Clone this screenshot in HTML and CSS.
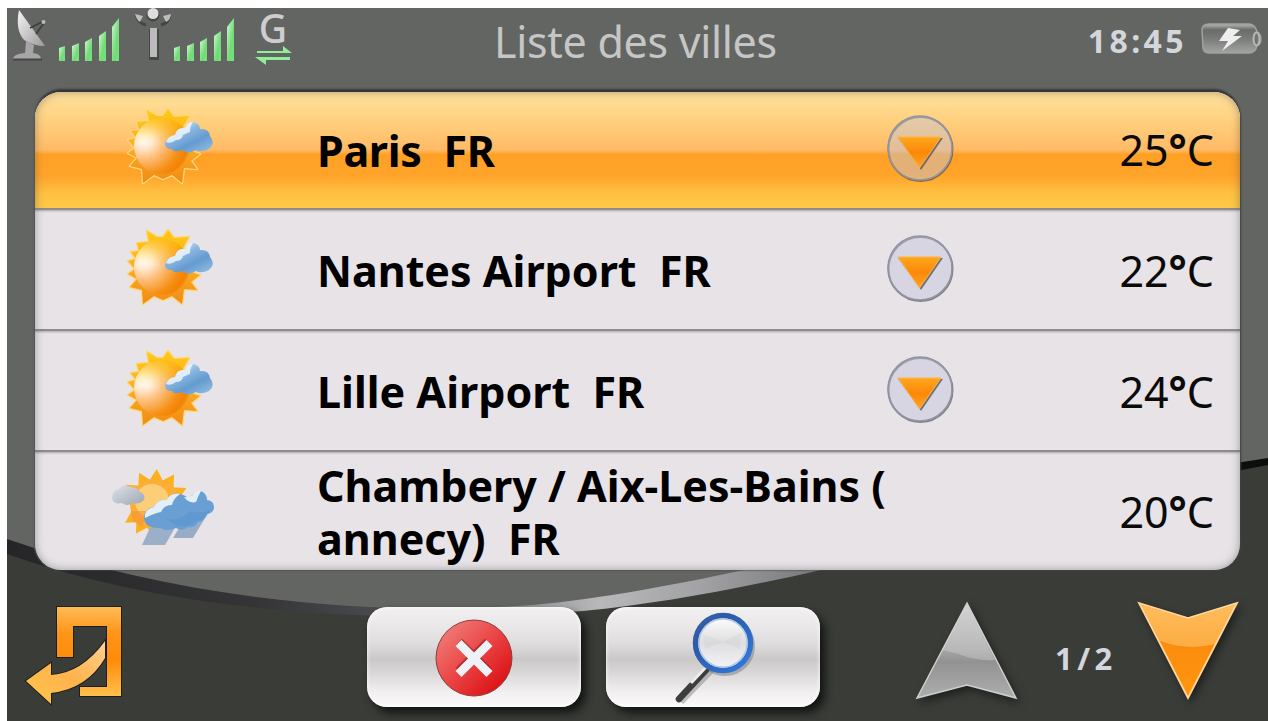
FILE: index.html
```html
<!DOCTYPE html>
<html lang="fr">
<head>
<meta charset="utf-8">
<title>Liste des villes</title>
<link rel="stylesheet" href="styles.css">
</head>
<body>
<svg class="defs" width="0" height="0" aria-hidden="true">
  <defs>
    <radialGradient id="sunBody" gradientUnits="userSpaceOnUse" cx="38" cy="39" r="52">
      <stop offset="0" stop-color="#fffdf8"/><stop offset=".15" stop-color="#fff0e0"/><stop offset=".4" stop-color="#fdbf7c"/><stop offset=".7" stop-color="#f68f14"/><stop offset=".85" stop-color="#f28206"/><stop offset="1" stop-color="#f9b428"/>
    </radialGradient>
    <linearGradient id="ray" gradientUnits="userSpaceOnUse" x1="0" y1="8" x2="0" y2="85">
      <stop offset="0" stop-color="#ffcb12"/><stop offset=".5" stop-color="#fbae24"/><stop offset="1" stop-color="#f08a14"/>
    </linearGradient>
    <linearGradient id="sunTop" x1="0" y1="0" x2="0" y2="1">
      <stop offset="0" stop-color="#ffc80a"/><stop offset=".45" stop-color="#ffc80a" stop-opacity="0"/>
    </linearGradient>
    <linearGradient id="cloudBlue" x1="0" y1="0" x2=".8" y2="1">
      <stop offset=".1" stop-color="#e9f4fc"/><stop offset=".4" stop-color="#8db9e2"/><stop offset=".7" stop-color="#659bd0"/><stop offset="1" stop-color="#8bb8df"/>
    </linearGradient>
    <linearGradient id="cloudGray" x1="0" y1="0" x2="1" y2="1">
      <stop offset="0" stop-color="#dde2e9"/><stop offset="1" stop-color="#9ea6b3"/>
    </linearGradient>
    <linearGradient id="tri" x1="0" y1="0" x2="0" y2="1">
      <stop offset="0" stop-color="#ffa71e"/><stop offset=".5" stop-color="#fb8806"/><stop offset="1" stop-color="#ffa42c"/>
    </linearGradient>
    <linearGradient id="silver" x1="0" y1="0" x2="1" y2="1">
      <stop offset="0" stop-color="#f4f4f4"/><stop offset="1" stop-color="#9d9b9c"/>
    </linearGradient>
    <linearGradient id="green" x1="0" y1="0" x2="1" y2="1">
      <stop offset="0" stop-color="#d2f8d2"/><stop offset=".6" stop-color="#72db78"/><stop offset="1" stop-color="#72e678"/>
    </linearGradient>

    <path id="r" d="M-8-23 0-37 8-23z"/>
    <symbol id="sunny-cloud" viewBox="0 0 110 100">
      <g stroke="#ffd67a" stroke-width="2.500" stroke-linejoin="round" fill="url(#ray)" paint-order="stroke">
        <path d="M43 22 41 11 51 17 57 17 62 10 68 18 83 17 77 28 83 38 85 52 94 55 85 62 91 70 78 69 76 84 66 76 57 80 48 76 37 84 36 70 24 67 31 59 22 54 29 49 22 41 30 39 25 32 33 31 31 23z"/>
      </g>
      <circle cx="56" cy="47" r="28" fill="url(#sunBody)"/>
      <circle cx="56" cy="47" r="28" fill="url(#sunTop)" opacity=".75"/>
      <path d="M59 45Q60 38 69 36 71 28 79 29 82 22 88 23 94 25 94 30 103 29 104 37 110 44 103 50 95 54 90 51 82 56 76 51 68 54 66 50 59 50 59 45z" fill="url(#cloudBlue)"/>
      <path d="M60 43Q62 37 69 36 71 28 79 29 82 22 87 23 84 27 84 33 79 35 77 36 76 41 70 41 65 45 60 43z" fill="#f4faff" opacity=".8"/>
    </symbol>
    <symbol id="sunny-rain" viewBox="0 0 110 100">
      <g transform="translate(49 43) rotate(3) scale(.95)" fill="#fbb01c">
        <use href="#r"/><use href="#r" transform="rotate(30)"/><use href="#r" transform="rotate(60)"/><use href="#r" transform="rotate(180)"/><use href="#r" transform="rotate(210)"/><use href="#r" transform="rotate(235)"/><use href="#r" transform="rotate(300)"/><use href="#r" transform="rotate(330)"/>
      </g>
      <circle cx="49" cy="43" r="25" fill="#fcae35"/>
      <circle cx="46" cy="40" r="17" fill="#ffdd9c" opacity=".65"/>
      <path d="M25 50 42 50 36 66 27 60z" fill="#f5923a" opacity=".6"/>
      <path d="M6 37Q6 29 13 28 18 22 25 26 31 26 33 30 40 33 38 39 33 44 27 42 21 46 16 42 7 44 6 37z" fill="url(#cloudGray)"/>
      <path d="M44 67 70 65 59 84H36z" fill="#9cafc9"/><path d="M75 64 99 57 87 77H67z" fill="#98acc8"/>
      <path d="M38 58Q38 47 48 46 51 38 60 39 66 31 74 33 79 34 82 37 85 36 87 33 91 28 97 31 101 34 101 39 108 40 108 46 108 52 101 53 99 60 92 61 88 68 82 66 76 71 70 67 60 71 54 67 40 68 38 58z" fill="#699fd3"/>
      <path d="M39 57Q38 48 48 46 51 38 60 39 66 31 74 33 67 38 66 44 58 44 55 51 49 52 39 57zM78 36Q85 37 87 33 90 29 95 30 92 35 90 41 83 43 78 36z" fill="#f0f7fc" opacity=".9"/>
      <path d="M60 57q12 5 24-7 10 4 20-1-2 9-13 11-17 12-31-3z" fill="#4d8ccb" opacity=".3"/>
    </symbol>
    <symbol id="more" viewBox="0 0 72 72">
      <circle cx="36.500" cy="37" r="32" fill="none" stroke="#3c3f48" stroke-width="2" opacity=".6"/>
      <circle cx="36" cy="36" r="32" fill="#c2c4da" fill-opacity=".45" stroke="#9295a0" stroke-width="1.500"/>
      <path d="M14 26H59L37 58z" fill="#4f5158" opacity=".75"/>
      <path d="M14 25H57L35.500 56z" fill="url(#tri)" stroke="#ffb648" stroke-width="1"/>
    </symbol>
    <symbol id="bars" viewBox="0 0 66 48">
      <g fill="url(#green)">
        <path d="M1 31 7 29V44H1z"/><path d="M14 29 21 26V44H14z"/><path d="M27 25 34 21V44H27z"/><path d="M41 19 48 14V44H41z"/><path d="M54 10 61 1V44H54z"/>
      </g>
    </symbol>
  </defs>
</svg>

<main class="screen">
  <svg class="backdrop" viewBox="0 0 1261 713" preserveAspectRatio="none">
    <defs>
      <linearGradient id="band" x1="0" y1="0" x2="1" y2="0">
        <stop offset="0" stop-color="#252527"/><stop offset=".2" stop-color="#353437"/><stop offset=".32" stop-color="#505055"/><stop offset=".4" stop-color="#8d8d90"/><stop offset=".47" stop-color="#b8b8bb"/><stop offset=".55" stop-color="#a2a2a5"/><stop offset=".65" stop-color="#76767a"/><stop offset=".9" stop-color="#151516"/><stop offset="1" stop-color="#0c0c0d"/>
      </linearGradient>
    </defs>
    <path fill="#3a3c38" d="M0 535C180 600 390 622 573 598 780 574 1040 490 1261 453V713H0z"/>
    <path fill="url(#band)" d="M0 531C180 594 370 608 526 597 720 580 1040 482 1261 450V457C1040 497 790 583 576 603 400 616 180 610 0 546z"/>
  </svg>

  <header class="status">
    <div class="signals">
      <svg class="dish" viewBox="0 0 38 54">
        <path d="M11 2Q7 22 16 32 26 38 37 38z" fill="url(#silver)"/>
        <path d="M22 20 34 14M28 26 36 15" stroke="#3d3f3c" stroke-width="1.600"/><circle cx="35.500" cy="14" r="2" fill="#bbb"/>
        <path d="M18 33 26 37 25 45Q33 46 33 51H5Q5 46 17 45z" fill="#a7a5a7"/>
        <path d="M5 51.500H34" stroke="#454744" stroke-width="2"/>
      </svg>
      <svg class="bars"><use href="#bars"/></svg>
      <svg class="antenna" viewBox="0 0 40 54">
        <path d="M16 21H26V52H16z" fill="#464845"/><path d="M17 20H24V49H17z" fill="#bcbabc"/>
        <circle cx="20" cy="7" r="6.500" fill="#454744"/><circle cx="20" cy="5.500" r="5.500" fill="#dedede"/>
        <path d="M3 7Q5 15 13 17M37 7Q36 15 28 17" fill="none" stroke="#444643" stroke-width="3"/>
        <path d="M2 6 10 8 7 14Q3 11 2 6M38 6 30 8 33 14Q38 11 38 6" fill="#bdbdbd"/>
      </svg>
      <svg class="bars"><use href="#bars"/></svg>
      <div class="network">
        <span class="gprs">G</span>
        <svg viewBox="0 0 38 20"><path d="M3 5H29V0L38 7H3zM36 11V14H12V19L1 11z" fill="#92ed98"/></svg>
      </div>
    </div>
    <h1 class="title">Liste des villes</h1>
    <div class="clock">
      <span class="time">18:45</span>
      <svg class="battery" viewBox="0 0 62 34">
        <defs><linearGradient id="bat" x1="0" y1="0" x2="0" y2="1"><stop offset="0" stop-color="#b5b5b5"/><stop offset=".2" stop-color="#6a6c6a"/><stop offset=".5" stop-color="#797b79"/><stop offset="1" stop-color="#a2a3a2"/></linearGradient></defs>
        <path d="M9 2H49Q55 2 57 10 61 12 61 17 61 22 57 24 55 31 49 31H9Q3 31 3 25L2 8Q2 2 9 2z" fill="url(#bat)" stroke="#a0a2a0" stroke-width="1.500"/>
        <ellipse cx="56.500" cy="17" rx="3" ry="6.500" fill="#737573" stroke="#b5b6b5" stroke-width="2"/>
        <path d="M28 6 40 8 33 14H42L22 29 28 19H19z" fill="#eee"/>
      </svg>
    </div>
  </header>

  <ul class="cities">
    <li class="city city--active">
      <svg class="weather"><use href="#sunny-cloud"/></svg>
      <div class="name">Paris&nbsp; FR</div>
      <svg class="more"><use href="#more"/></svg>
      <div class="temp">25<b>°</b>C</div>
    </li>
    <li class="city">
      <svg class="weather"><use href="#sunny-cloud"/></svg>
      <div class="name">Nantes Airport&nbsp; FR</div>
      <svg class="more"><use href="#more"/></svg>
      <div class="temp">22<b>°</b>C</div>
    </li>
    <li class="city">
      <svg class="weather"><use href="#sunny-cloud"/></svg>
      <div class="name">Lille Airport&nbsp; FR</div>
      <svg class="more"><use href="#more"/></svg>
      <div class="temp">24<b>°</b>C</div>
    </li>
    <li class="city city--last">
      <svg class="weather"><use href="#sunny-rain"/></svg>
      <div class="name">Chambery / Aix-Les-Bains (<br>annecy)&nbsp; FR</div>
      <div class="temp">20<b>°</b>C</div>
    </li>
  </ul>

  <footer class="toolbar">
    <svg class="back" viewBox="0 0 104 106">
      <defs>
        <linearGradient id="frame" x1="0" y1="0" x2="0" y2="1"><stop offset="0" stop-color="#ffbb57"/><stop offset=".3" stop-color="#ff9417"/><stop offset=".6" stop-color="#ff8c08"/><stop offset="1" stop-color="#ffc04c"/></linearGradient>
        <linearGradient id="curve" x1="1" y1="0" x2="0" y2="1"><stop offset="0" stop-color="#ffd190"/><stop offset=".5" stop-color="#ffb24c"/><stop offset="1" stop-color="#ffc64a"/></linearGradient>
      </defs>
      <g stroke="#1d1e1b" stroke-width="2" paint-order="stroke">
        <path d="M33 4H97V93H56V84H83V23H49V54H33z" fill="url(#frame)"/>
        <path d="M81 38V55Q63 86 27 90V101L2 78 27 60V72Q58 70 81 38z" fill="url(#curve)"/>
      </g>
    </svg>
    <button class="key key--cancel" aria-label="Supprimer">
      <svg viewBox="0 0 80 80">
        <defs><linearGradient id="red" x1="0" y1="0" x2="1" y2="1"><stop offset=".1" stop-color="#f07c78"/><stop offset=".5" stop-color="#ea4344"/><stop offset=".85" stop-color="#dc1417"/></linearGradient></defs>
        <circle cx="40" cy="40" r="38" fill="url(#red)" stroke="#8e3c3c" stroke-width="1"/>
        <path d="M26 26 55 55M55 26 26 55" stroke="#8f1e22" stroke-width="9" opacity=".6" transform="translate(-1 -2)"/>
        <path d="M24.500 25 55.500 56M55.500 25 24.500 56" stroke="#eef2f6" stroke-width="8.500"/>
      </svg>
    </button>
    <button class="key key--search" aria-label="Rechercher">
      <svg viewBox="0 0 84 92">
        <defs>
          <linearGradient id="rim" x1="0" y1="0" x2="1" y2="1"><stop offset="0" stop-color="#3a62a4"/><stop offset=".3" stop-color="#2d5ba6"/><stop offset="1" stop-color="#2e7ce4"/></linearGradient>
          <linearGradient id="glass" x1="0" y1="0" x2="0" y2="1"><stop offset="0" stop-color="#fff"/><stop offset=".5" stop-color="#dedee0"/><stop offset="1" stop-color="#f6f6f8"/></linearGradient>
        </defs>
        <path d="M7 89 38 57" stroke="#888" stroke-width="6" opacity=".5"/>
        <path d="M5 86 32 57" stroke="#3b3d3f" stroke-width="6.500" stroke-linecap="round"/>
        <path d="M17 70 32 54" stroke="#eee" stroke-width="3"/>
        <circle cx="51" cy="33" r="27" fill="none" stroke="#555" stroke-width="6" opacity=".35"/>
        <circle cx="49" cy="30" r="27.500" fill="url(#glass)" stroke="url(#rim)" stroke-width="5.500"/>
        <circle cx="49" cy="30" r="24" fill="none" stroke="#b4c8e8" stroke-width="1.500"/>
        <path d="M29 21 49 29 68 19 66 36 49 29 31 36z" fill="#ccc" opacity=".3"/>
      </svg>
    </button>
    <svg class="arrow arrow--up" viewBox="0 0 108 106">
      <defs><linearGradient id="up" x1="0" y1="0" x2="0" y2="1"><stop offset="0" stop-color="#d0d0d0"/><stop offset=".5" stop-color="#a4a4a4"/><stop offset=".62" stop-color="#929292"/><stop offset="1" stop-color="#aeaeae"/></linearGradient></defs>
      <path d="M54 4 103 99 54 86 4 99z" fill="url(#up)" stroke="#cfcfcf" stroke-width="1.500"/>
      <path d="M54 6 82 61Q62 62 46 55L29 51z" fill="#ddd" opacity=".35"/>
    </svg>
    <span class="page">1 / 2</span>
    <svg class="arrow arrow--down" viewBox="0 0 108 106">
      <defs><linearGradient id="down" x1="0" y1="0" x2="0" y2="1"><stop offset="0" stop-color="#ffac3c"/><stop offset=".4" stop-color="#fb8c0d"/><stop offset="1" stop-color="#ff960f"/></linearGradient></defs>
      <path d="M5 4 54 19 103 4 54 99z" fill="url(#down)" stroke="#ffd79c" stroke-width="1.800"/>
      <path d="M7 6 54 20 101 6 81 45Q55 52 26 42z" fill="#ffd07e" opacity=".5"/>
    </svg>
  </footer>
</main>
</body>
</html>
```
FILE: styles.css
```css
* { box-sizing: border-box; }
body {
  margin: 0;
  width: 1268px;
  height: 721px;
  overflow: hidden;
  padding: 8px 0 0 7px;
  background: #fff;
  font-family: "Noto Sans", "Open Sans", sans-serif;
}
.defs { position: absolute; }
.screen {
  position: relative;
  width: 1261px;
  height: 713px;
  display: flex;
  flex-direction: column;
  background: #636562;
}
.backdrop { position: absolute; inset: 0; width: 100%; height: 100%; }
.status, .cities, .toolbar { position: relative; }

.status {
  flex: none;
  height: 84px;
  display: grid;
  grid-template-columns: 400px 460px 1fr;
}
.signals { display: flex; align-items: flex-start; }
.dish { width: 38px; height: 54px; margin-left: 1px; }
.bars { width: 66px; height: 48px; margin: 9px 0 0 12px; }
.antenna { width: 40px; height: 54px; margin-left: 9px; }
.antenna + .bars { margin-left: 0; }
.network { width: 38px; margin-left: 15px; display: flex; flex-direction: column; align-items: center; }
.network svg { width: 38px; height: 20px; }
.gprs { font-size: 39px; line-height: 54px; height: 54px; margin: -7px 0 -9px; color: #cfcdcf; font-weight: 500; }
.title { margin: 0; font-weight: 400; font-size: 43px; line-height: 67px; color: #c6c6c6; padding-left: 87px; white-space: nowrap; letter-spacing: -0.300px; }
.clock { display: flex; align-items: flex-start; justify-content: flex-end; gap: 13px; padding-right: 6px; }
.time { font-size: 32px; font-weight: 700; line-height: 66px; letter-spacing: 3.400px; color: #d3d6db; }
.battery { width: 62px; height: 34px; margin-top: 14px; }

.cities {
  flex: none;
  list-style: none;
  margin: 0 0 0 28px;
  padding: 0;
  width: 1205px;
  height: 478px;
  border-radius: 26px;
  overflow: hidden;
  background: #e7e3e7;
  box-shadow: 0 -4px 2px -1px #353539, 1px 0 2px #404244, -1px 0 2px #55575a;
}
.cities::after {
  content: "";
  position: absolute;
  inset: 0;
  border-radius: 26px;
  box-shadow: inset 0 0 9px rgba(80, 82, 80, .5);
}
.city {
  height: 121px;
  display: grid;
  grid-template-columns: 282px 567px 72px 1fr;
  align-items: center;
  border-bottom: 2px solid #8d8b8e;
  box-shadow: 0 1px 2px #aaa8aa;
}
.city--active {
  height: 118px;
  background: linear-gradient(#ffe09a 3%, #ffd07e 25%, #ffba65 50%, #ffa025 54%, #ffa42a 72%, #ffc142 88%, #ffc846);
}
.city--last { height: 118px; border: 0; box-shadow: none; }
.weather { width: 110px; height: 100px; margin: 0 0 0 71px; }
.city--active .weather { margin-top: -2px; }
.name { font-weight: 700; font-size: 43px; line-height: 53px; padding-top: 2px; color: #000; white-space: nowrap; }
.city--active .name { padding-top: 0; letter-spacing: -0.300px; }
.more { width: 72px; height: 72px; margin-top: -3px; }
.city--active .more { margin-top: -5px; }
.temp { grid-column: 4; text-align: right; padding: 2px 26px 0 0; font-size: 43px; line-height: 60px; color: #0a0a0a; }
.city--active .temp { padding-top: 0; }

.toolbar { flex: 1; display: flex; align-items: flex-start; }
.back { width: 104px; height: 106px; margin: 33px 0 0 17px; }
.key {
  width: 214px;
  height: 100px;
  border: 0;
  border-radius: 20px;
  padding: 0;
  display: flex;
  background: linear-gradient(#f2f0f0, #e9e7e7 20%, #dddbdb 38%, #cac8c8 52%, #d9d7d7 66%, #f1efef 85%, #fbf9f9);
  box-shadow: 5px 6px 8px #131512, inset 0 0 4px #fff;
}
.key--cancel { margin: 37px 0 0 239px; }
.key--cancel svg { width: 80px; height: 80px; margin: 11px 0 0 67px; }
.key--search { margin: 37px 0 0 25px; }
.key--search svg { width: 84px; height: 92px; margin: 6px 0 0 68px; overflow: visible; }
.arrow { width: 108px; height: 106px; margin-top: 29px; filter: drop-shadow(3px 4px 4px #1e201d); }
.arrow--up { margin-left: 93px; }
.page { width: 60px; margin: 67px 0 0 34px; font-size: 31px; line-height: 42px; font-weight: 700; color: #d3d6dc; white-space: nowrap; letter-spacing: -1.800px; }
.arrow--down { margin-left: 19px; }
```
